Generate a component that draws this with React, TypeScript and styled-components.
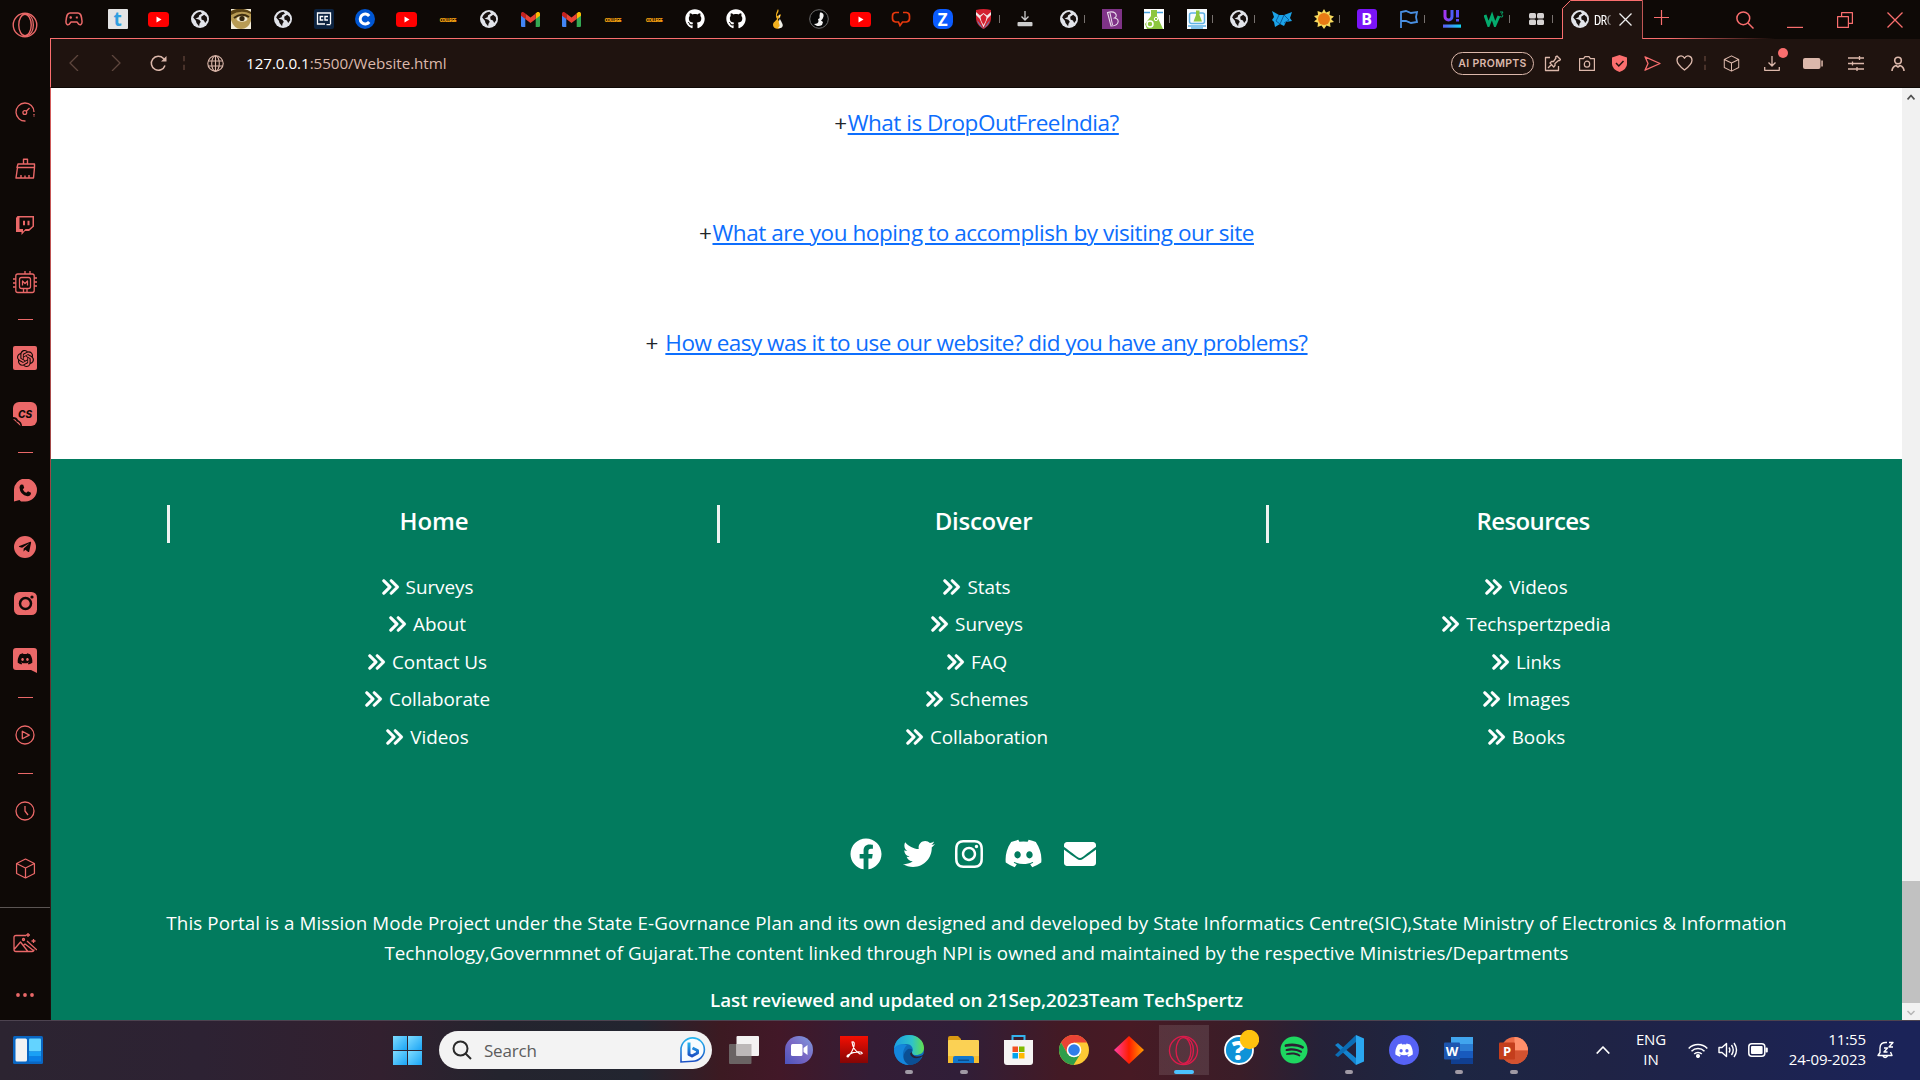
import React from "react";
import styled, { createGlobalStyle } from "styled-components";
import { FaFacebook, FaTwitter, FaInstagram, FaEnvelope, FaGithub, FaSpotify, FaTelegramPlane } from "react-icons/fa";
import { FaDiscord, FaAnglesRight } from "react-icons/fa6";
import { SiOpenai } from "react-icons/si";

const coral = "#fa6e6e";
const rose = "#ea6868";
const sand = "#dcb8ab";
const ui = `"Segoe UI", "Open Sans", "Noto Sans", sans-serif`;

const Global = createGlobalStyle`
  * { box-sizing: border-box; }
  body { margin: 0; background: #0e0906; font-family: ${ui}; overflow: hidden; }
  svg { display: block; flex: none; }
`;

const Desktop = styled.div`
  width: 1920px;
  height: 1080px;
  display: flex;
  flex-direction: column;
  overflow: hidden;
`;
const BrowserWindow = styled.div`
  display: flex;
  height: 1020px;
  background: #0e0906;
`;
const SideBar = styled.nav`
  width: 50px;
  height: 1020px;
  display: flex;
  flex-direction: column;
  color: ${rose};
`;
const SideSlot = styled.div<{ $h?: number; $gap?: number }>`
  height: ${(p) => p.$h ?? 56}px;
  margin-top: ${(p) => p.$gap ?? 0}px;
  display: flex;
  align-items: center;
  justify-content: center;
`;
const Dash = styled.i`
  width: 15px;
  height: 1px;
  background: ${rose};
`;
const SideRule = styled.div`
  height: 1px;
  margin-top: 11px;
  background: #5b5553;
`;
const IconTile = styled.span`
  width: 24px;
  height: 24px;
  border-radius: 2px;
  background: ${rose};
  color: #0e0906;
  display: flex;
  align-items: center;
  justify-content: center;
`;
const CsTile = styled(IconTile)`
  border-radius: 6px;
  position: relative;
  font: italic 800 10px Inter, sans-serif;
  svg { position: absolute; left: 0; bottom: 0; }
`;
const TelegramDisc = styled(IconTile)`
  width: 22px;
  height: 22px;
  border-radius: 50%;
`;
const Main = styled.div`
  width: 1870px;
  display: flex;
  flex-direction: column;
`;
const TabStrip = styled.div`
  height: 39px;
  display: flex;
  background: linear-gradient(90deg, ${coral} 0 1620px, #0e0906 1725px) bottom / 100% 1px no-repeat #0e0906;
`;
const Tab = styled.div<{ $w: number; $sliver?: boolean }>`
  width: ${(p) => p.$w}px;
  height: 38px;
  display: flex;
  flex: none;
  align-items: center;
  justify-content: center;
  position: relative;
  &::after {
    content: "";
    display: ${(p) => (p.$sliver ? "block" : "none")};
    position: absolute;
    right: 5px;
    top: 15px;
    width: 1px;
    height: 8px;
    background: #77716e;
  }
`;
const WideTabs = styled.div`
  display: flex;
  flex: none;
  margin-left: 2px;
`;
const ActiveTab = styled.div`
  width: 81px;
  height: 39px;
  margin-left: 4px;
  display: flex;
  align-items: center;
  padding: 0 0 1px 9px;
  position: relative;
  flex: none;
  background: #1f130f;
  clip-path: polygon(8px 0, 100% 0, 100% 100%, 0 100%, 0 8px);
`;
const TabOutline = styled.svg`
  position: absolute;
  inset: 0;
`;
const TabTitle = styled.span`
  width: 17px;
  margin: 0 8px 0 5px;
  overflow: hidden;
  white-space: nowrap;
  font: 15px "Open Sans", sans-serif;
  font-stretch: condensed;
  letter-spacing: -0.8px;
  color: #fff;
  mask-image: linear-gradient(90deg, #000 65%, #0004);
`;
const NewTab = styled.div`
  width: 37px;
  display: flex;
  align-items: center;
  justify-content: center;
  padding-bottom: 4px;
  color: ${coral};
`;
const WindowButtons = styled.div`
  margin-left: auto;
  display: flex;
  align-items: center;
  color: ${coral};
`;
const WindowButton = styled.div`
  width: 50px;
  height: 38px;
  display: flex;
  align-items: center;
  justify-content: center;
`;
const AddressBar = styled.div`
  height: 49px;
  display: flex;
  align-items: center;
  background: #1f130f;
  border-left: 1px solid ${coral};
  border-bottom: 1px solid #0e0906;
  color: ${sand};
`;
const ToolCell = styled.div<{ $w: number; $color?: string }>`
  width: ${(p) => p.$w}px;
  height: 48px;
  display: flex;
  flex: none;
  align-items: center;
  justify-content: center;
  position: relative;
  color: ${(p) => p.$color ?? "inherit"};
`;
const Url = styled.div`
  margin-left: 3px;
  font-size: 15.2px;
  letter-spacing: -0.05px;
  b { color: #fff; font-weight: 400; }
`;
const Spacer = styled.div`flex: 1;`;
const PromptPill = styled.div`
  width: 83px;
  height: 23px;
  border: 1.5px solid ${sand};
  border-radius: 12px;
  display: flex;
  align-items: center;
  justify-content: center;
  font: 600 10.5px Inter, sans-serif;
  letter-spacing: 0.35px;
`;
const Separator = styled.i`
  height: 14px;
  border-left: 2px dashed #49322a;
`;
const Badge = styled.i`
  position: absolute;
  right: 3px;
  top: 9px;
  width: 10px;
  height: 10px;
  border-radius: 50%;
  background: ${coral};
`;
const Viewport = styled.div`
  height: 932px;
  display: flex;
`;
const Page = styled.div`
  width: 1852px;
  height: 932px;
  overflow: hidden;
  display: flex;
  flex-direction: column;
  background: #fff;
  border-left: 1px solid;
  border-image: linear-gradient(#d65d5d, #a04848 40%, #1a0c0a) 1;
`;
const FaqList = styled.section`
  height: 371px;
  padding-top: 17px;
  display: flex;
  flex-direction: column;
  align-items: center;
  gap: 74px;
  color: #212529;
`;
const FaqRow = styled.div<{ $ls: number }>`
  height: 36px;
  line-height: 36px;
  font-size: 22.5px;
  white-space: pre;
  letter-spacing: ${(p) => p.$ls}px;
`;
const Plus = styled.span`
  letter-spacing: 0.6px;
`;
const FaqLink = styled.a`
  color: #0d6efd;
  text-decoration: underline;
  text-decoration-thickness: 2px;
  text-underline-offset: 2px;
`;
const Footer = styled.footer`
  height: 561px;
  background: #027b5e;
  color: #fff;
  padding-top: 46px;
  display: flex;
  flex-direction: column;
  align-items: center;
`;
const FooterColumns = styled.div`
  display: grid;
  grid-template-columns: repeat(3, 549.5px);
`;
const FooterColumn = styled.div`
  padding: 0 14px 0 15px;
`;
const ColumnTitle = styled.h4<{ $ls: number }>`
  margin: 0 0 25px;
  height: 38px;
  line-height: 31px;
  padding-left: 10px;
  border-left: 3px solid #eef3f1;
  text-align: center;
  font-size: 24px;
  font-weight: 600;
  letter-spacing: ${(p) => p.$ls}px;
`;
const FooterLink = styled.div`
  height: 37.5px;
  padding-right: 2px;
  display: flex;
  align-items: center;
  justify-content: center;
  gap: 6px;
  font-size: 18.9px;
  letter-spacing: -0.05px;
  svg { stroke: currentColor; stroke-width: 18px; }
`;
const SocialRow = styled.div`
  margin: 82px 7px 0 0;
  height: 32px;
  display: flex;
  gap: 20.5px;
  align-items: center;
`;
const SocialIcon = styled.span<{ $w: number }>`
  width: ${(p) => p.$w}px;
  display: flex;
  justify-content: center;
`;
const Legal = styled.p<{ $ls: number }>`
  margin: 0;
  height: 30px;
  line-height: 30px;
  white-space: nowrap;
  font-size: 18.8px;
  letter-spacing: ${(p) => p.$ls}px;
`;
const LegalBlock = styled.div`
  margin-top: 38px;
  display: flex;
  flex-direction: column;
  align-items: center;
`;
const Reviewed = styled(Legal)`
  margin-top: 17px;
  font-weight: 600;
`;
const ScrollTrack = styled.div`
  width: 18px;
  height: 932px;
  background: #f1f1f1;
  display: flex;
  flex-direction: column;
  align-items: center;
`;
const ScrollThumb = styled.div`
  width: 18px;
  height: 122px;
  margin-top: 774px;
  margin-bottom: 7px;
  background: #c1c1c1;
`;
const Taskbar = styled.div`
  height: 60px;
  border-top: 1px solid #4d4350;
  padding-bottom: 1px;
  display: flex;
  align-items: center;
  color: #fff;
  background: linear-gradient(90deg, #2c2431 0, #2d2233 200px, #32202f 380px, #24242e 500px, #222530 640px, #3c1a22 720px, #421828 780px, #331d36 870px, #301e38 960px, #431a25 1060px, #471a24 1130px, #3a1d28 1240px, #252138 1320px, #1d2642 1440px, #1f2345 1600px, #1b2358 1900px);
`;
const WidgetButton = styled.div`
  width: 55px;
  display: flex;
  justify-content: center;
`;
const StartButton = styled.div`
  margin-left: 338px;
  width: 29px;
  height: 29px;
  display: grid;
  grid-template-columns: 1fr 1fr;
  gap: 1px;
  i { background: linear-gradient(135deg, #7fdcff, #1aa4f5); }
`;
const SearchBox = styled.div`
  margin-left: 17px;
  width: 273px;
  height: 38px;
  border-radius: 19px;
  background: #f3f3f3;
  display: flex;
  align-items: center;
  padding: 0 6px 0 13px;
  color: #5c5c5c;
  font-size: 17px;
  span { margin-left: 12px; flex: 1; letter-spacing: -0.2px; }
`;
const AppRow = styled.div`
  margin-left: 4px;
  display: flex;
`;
const AppButton = styled.div<{ $state?: "open" | "active" }>`
  width: 55px;
  height: 58px;
  display: flex;
  align-items: center;
  justify-content: center;
  position: relative;
  background: ${(p) => (p.$state === "active" ? "linear-gradient(#ffffff1c,#ffffff1c) 3px center / 50px 50px no-repeat" : "none")};
  &::after {
    content: "";
    display: ${(p) => (p.$state ? "block" : "none")};
    position: absolute;
    bottom: 5px;
    width: ${(p) => (p.$state === "active" ? 20 : 8)}px;
    height: 4px;
    border-radius: 2px;
    background: ${(p) => (p.$state === "active" ? "#4cc2ff" : "#a09aa5")};
  }
`;
const Tray = styled.div`
  margin-left: auto;
  width: 333px;
  display: flex;
  align-items: center;
`;
const TrayCell = styled.div<{ $w: number }>`
  width: ${(p) => p.$w}px;
  display: flex;
  justify-content: center;
`;
const TrayText = styled.div<{ $w: number; $right?: boolean }>`
  width: ${(p) => p.$w}px;
  padding-bottom: 2px;
  text-align: ${(p) => (p.$right ? "right" : "center")};
  font-size: 15px;
  line-height: 20px;
  letter-spacing: -0.1px;
  white-space: nowrap;
`;
const LetterTile = styled.span<{ $bg: string; $fg: string; $r: number; $fs: number }>`
  width: 20px;
  height: 20px;
  border-radius: ${(p) => p.$r}px;
  background: ${(p) => p.$bg};
  color: ${(p) => p.$fg};
  display: flex;
  align-items: center;
  justify-content: center;
  font-weight: 700;
  font-size: ${(p) => p.$fs}px;
  line-height: 1;
`;
const CollegeMark = styled.span`
  padding-top: 2px;
  color: #f0a010;
  font: 800 5px/8px "Open Sans", sans-serif;
  letter-spacing: -0.85px;
`;

type SvgProps = { w: number; h?: number; box?: string; sw?: number; children: React.ReactNode };
const Line = ({ w, h = w, box = "0 0 24 24", sw = 1.5, children }: SvgProps) => (
  <svg width={w} height={h} viewBox={box} fill="none" stroke="currentColor" strokeWidth={sw} strokeLinejoin="round">
    {children}
  </svg>
);
const Solid = ({ w, h = w, box = "0 0 24 24", children }: SvgProps) => (
  <svg width={w} height={h} viewBox={box} fill="currentColor">{children}</svg>
);

const Opera = ({ size, color, sw = 1.6 }: { size: number; color: string; sw?: number }) => (
  <svg width={size} height={size} viewBox="0 0 30 30" fill="none" stroke={color} strokeWidth={sw}>
    <circle cx="15" cy="15" r="13.6" />
    <ellipse cx="15" cy="15" rx="7.2" ry="12.4" />
    <path d="M16 2.5c6 .5 8.600 6.500 8.600 12.500S22 27 16 27.500" />
  </svg>
);
const Globe = ({ size = 18 }: { size?: number }) => (
  <svg width={size} height={size} viewBox="0 0 18 18">
    <circle cx="9" cy="9" r="9" fill="#e2e4ea" />
    <path d="M2.200 7.500C3.500 4.500 6 2 9.500 1.800l1.500 1.700-2.800 1.700-.6 2L4.500 8.600l3.800 1.200 1.500 1.900-1.300 2-.4 2.500-2.600-3.200-.6-2.300z" fill="#17110f" />
    <path d="M10.200 6.800l3-2 2.600 2.200.4 3.200-2 2.800-1.300-2.500-2.400-1z" fill="#17110f" />
  </svg>
);
const YouTube = () => (
  <svg width="21" height="15" viewBox="0 0 21 15"><rect width="21" height="15" rx="3.500" fill="#f00" /><path d="M8.500 4.500v6l5-3z" fill="#fff" /></svg>
);
const Gmail = () => (
  <svg width="19" height="15" viewBox="0 0 19 15">
    <path d="M0 2v11.500A1.300 1.300 0 0 0 1.300 15H4.300V6z" fill="#4285f4" />
    <path d="M19 2v11.500a1.300 1.300 0 0 1-1.300 1.500H14.700V6z" fill="#34a853" />
    <path d="M14.700 1.500V7L19 3.800V2c0-2-2-2.500-3.300-1.500z" fill="#fbbc04" />
    <path d="M4.300 7V1.500l5.200 4 5.200-4V7l-5.200 4z" fill="#ea4335" />
    <path d="M0 2v1.800L4.300 7V1.500L3.300.700C2-.5 0 0 0 2z" fill="#c5221f" />
  </svg>
);
const College = () => <CollegeMark>COLLEGE</CollegeMark>;
const Cube = ({ size }: { size: number }) => (
  <Line w={size} box="0 0 20 20" sw={1.2}><path d="M10 1l8.500 4.200v9.600L10 19l-8.500-4.200V5.200zM1.500 5.200L10 9.500l8.500-4.300M10 9.500V19" /></Line>
);

const favicons: { icon: React.ReactNode; sliver?: boolean }[] = [
  { icon: <LetterTile $bg="#e4e4e4" $fg="#2f9fe0" $r={1} $fs={19}>t</LetterTile> },
  { icon: <YouTube /> },
  { icon: <Globe /> },
  { icon: (
    <svg width="20" height="20" viewBox="0 0 20 20"><rect width="20" height="20" fill="#f3ecd8" /><path d="M0 2Q10-3 20 3v9q-3 8-10 8T0 11z" fill="#b89b54" /><path d="M0 2Q10-3 20 3v2Q10 0 0 6z" fill="#5b4315" /><path d="M3 9Q10 3 18 8" stroke="#3c2c10" strokeWidth="2" fill="none" /><ellipse cx="11" cy="10" rx="5.500" ry="2.800" fill="#efe6cc" /><circle cx="11" cy="9.500" r="2.600" fill="#33260f" /></svg>
  ) },
  { icon: <Globe /> },
  { icon: (
    <svg width="20" height="20" viewBox="0 0 20 20"><rect width="20" height="20" rx="2" fill="#0c2340" /><path d="M11 15H3.500V4h13v11M12.500 15.700h4" stroke="#fff" strokeWidth="1.300" fill="none" /><path d="M9.300 7.500H6.300v3.500h3M14 7.500h-3v3.500h3" stroke="#fff" strokeWidth="1.400" fill="none" /></svg>
  ) },
  { icon: (
    <svg width="20" height="20" viewBox="0 0 20 20"><circle cx="10" cy="10" r="10" fill="#0056d2" /><path d="M14.200 7A5 5 0 1 0 14.200 13" stroke="#fff" strokeWidth="3" fill="none" /></svg>
  ) },
  { icon: <YouTube /> },
  { icon: <College /> },
  { icon: <Globe /> },
  { icon: <Gmail /> },
  { icon: <Gmail /> },
  { icon: <College /> },
  { icon: <College /> },
  { icon: <FaGithub size={20} color="#fff" /> },
  { icon: <FaGithub size={20} color="#fff" /> },
  { icon: (
    <svg width="12" height="20" viewBox="0 0 12 20"><path d="M6 0c2 3-2 5-1 7 3-1 4-2 4-2 0 3-3 4-3 6 2 2 5 4 3 7-2 3-8 2-8-2 0-3 3-4 4-6-2-3-1-6 1-10z" fill="#f2b01e" /><path d="M7 5c3 4-1 6 0 9s1 3-1 5c4 1 6-2 4-5-1-3-3-4-3-9z" fill="#efeee6" /></svg>
  ) },
  { icon: (
    <svg width="20" height="20" viewBox="0 0 20 20"><circle cx="10" cy="10" r="9.300" fill="#050505" stroke="#6e6e6e" /><path d="M11 3.500c3 0 4 2 3.500 4L13.500 10l-1.500 1.500 2 1.500-1 3c-3 2-6 1-8-1 3 0 4.500-1 4.500-3l-.5-2c1.500 0 2-1 1.500-3z" fill="#f3f3f3" /></svg>
  ) },
  { icon: <YouTube /> },
  { icon: (
    <svg width="20" height="16" viewBox="0 0 20 16" fill="none" stroke="#e8380d" strokeWidth="1.700"><path d="M8 1.500H4.500a3.500 3.500 0 0 0-3 3.500v2.500a3.500 3.500 0 0 0 3 3.500H7.500l1.500 3.500 2.500-3.500h4a3.500 3.500 0 0 0 3-3.500V5a3.500 3.500 0 0 0-3-3.500H12" /></svg>
  ) },
  { icon: <LetterTile $bg="#0b5cff" $fg="#fff" $r={7} $fs={17}>Z</LetterTile> },
  { icon: (
    <svg width="17" height="20" viewBox="0 0 17 20"><path d="M1 1q7.500-2 15 0v8c0 6-4 9-7.500 11C5 18 1 15 1 9z" fill="#d3202f" /><path d="M2 11l6.500 9L15 11c-1 4-4 7-6.500 9C6 18 3 15 2 11z" fill="#3aa0e0" /><path d="M1 3l4 3.500L8.500 4 12 6.500 16 3v3l-3.500 3.500-4 9-4-9L1 6z" fill="#f3e9ea" /><path d="M5.500 8l3-3 3 3-.8 4-2.200 4-2.200-4z" fill="#d3202f" /></svg>
  ), sliver: true },
  { icon: (
    <svg width="16" height="16" viewBox="0 0 16 16"><path d="M8 0v9M4.500 5.500L8 9l3.500-3.500" stroke="#ccc" strokeWidth="1.300" fill="none" /><rect x="0.500" y="11" width="15" height="4.200" rx="1" fill="#ccc" /></svg>
  ) },
];
const wideFavicons: { icon: React.ReactNode; sliver?: boolean }[] = [
  { icon: <Globe />, sliver: true },
  { icon: (
    <svg width="20" height="20" viewBox="0 0 20 20"><rect width="20" height="20" fill="#7f3387" /><path d="M5.500 3.500q5-1.500 7.500.5c2 2 1.500 4-.5 5 3.500.5 4.500 3 3 5.500-1.500 2-4 2.500-6.500 2.500zM8 4l2.500 12" stroke="#eadcec" strokeWidth="1.100" fill="none" /></svg>
  ) },
  { icon: (
    <svg width="20" height="20" viewBox="0 0 20 20"><rect width="20" height="20" fill="#fff" /><path d="M0 3.500h6M13 3.500h6" stroke="#4aa3df" strokeWidth="1.500" /><path d="M7 1h6v6l6 13H3l-2-5 6-8z" fill="#8dc63f" /><circle cx="6" cy="15" r="3" fill="none" stroke="#fff" strokeWidth="1.500" /><circle cx="12" cy="10" r="1.700" fill="none" stroke="#fff" /></svg>
  ), sliver: true },
  { icon: (
    <svg width="20" height="20" viewBox="0 0 20 20"><rect width="20" height="20" fill="#f7fbff" /><rect x="2.500" y="4" width="15" height="10.500" rx="2" fill="none" stroke="#5fb2e6" strokeWidth="1.500" /><path d="M9 1.500h3.500V6l2.500 6.500H6.500L9 6z" fill="#8dc63f" /><path d="M1 17h18M4 19h12" stroke="#5fb2e6" strokeWidth="1.300" /></svg>
  ), sliver: true },
  { icon: <Globe />, sliver: true },
  { icon: (
    <svg width="20" height="16" viewBox="0 0 20 16"><path d="M0 0l7 4h5l8-3-2 6 2 3-6 1-2 4-4-2-5 3-1-5-2-2 2-3z" fill="#1ba3e8" /><path d="M7 4l-3 6 4 3 4-9 5 5-5 3" stroke="#0c5c9c" strokeWidth="1" fill="none" /></svg>
  ) },
  { icon: (
    <svg width="20" height="20" viewBox="0 0 20 20"><path d="M10 0l2 3.500L16 2l-.5 4L20 7.500 17 10l3 3-4 .8.500 4.200-4-1.500L10 20l-2.500-3.500L3.500 18l.5-4.200L0 12.500 3 10 0 7l4-1-.5-4L8 3.500z" fill="#f7d95c" /><circle cx="10" cy="10" r="6" fill="#ea7a14" /></svg>
  ), sliver: true },
  { icon: <LetterTile $bg="#7a14f8" $fg="#fff" $r={3} $fs={16}>B</LetterTile> },
  { icon: (
    <svg width="20" height="20" viewBox="0 0 20 20" fill="none" stroke="#4a90e2" strokeWidth="1.800"><path d="M2 19V3l5-1 5 2 6-1-1 5 1 5-6 1-5-2H2" /></svg>
  ), sliver: true },
  { icon: (
    <svg width="18" height="18" viewBox="0 0 18 18"><defs><linearGradient id="uig"><stop stopColor="#a435f0" /><stop offset="1" stopColor="#4a5ff6" /></linearGradient><linearGradient id="uib"><stop stopColor="#5b5cf6" /><stop offset="1" stopColor="#12d8f6" /></linearGradient></defs><path d="M2 0v6.500a3.500 3.500 0 0 0 7 0V0" stroke="url(#uig)" strokeWidth="3" fill="none" /><rect x="13" y="0" width="3" height="7.500" fill="#5a4cf7" /><rect x="13" y="9" width="3" height="2.500" fill="#5a4cf7" /><rect y="14.500" width="18" height="3.200" fill="url(#uib)" /></svg>
  ) },
  { icon: (
    <svg width="20" height="16" viewBox="0 0 20 16"><path d="M1 4l3.500 10L8 5l3 9 4-9" stroke="#04aa6d" strokeWidth="3" fill="none" /><path d="M16 1h3l-1.500 2.200Q19.500 4 18.500 5.800 17 6.500 16 5.500" stroke="#04aa6d" strokeWidth="1" fill="none" /></svg>
  ), sliver: true },
  { icon: (
    <svg width="15" height="12" viewBox="0 0 15 12" fill="#d5d2d1"><rect width="7" height="5.500" rx="1.500" /><rect x="8" width="7" height="5.500" rx="1.500" /><rect y="6.500" width="7" height="5.500" rx="1.500" /><rect x="8" y="6.500" width="7" height="5.500" rx="1.500" /></svg>
  ), sliver: true },
];

const Side = () => (
  <SideBar>
    <SideSlot $h={50}><Opera size={26} color={rose} /></SideSlot>
    <SideSlot $gap={34}><Line w={20} box="0 0 20 20" sw={1.300}><path d="M10.500 19A9 9 0 1 1 19 10M19 12v1.500M19 14.500v.5" /><circle cx="9.800" cy="10.500" r="1.900" /><path d="M11.200 9.200L14.500 6" /></Line></SideSlot>
    <SideSlot><Line w={21} box="0 0 21 21" sw={1.400}><path d="M8.500 6V1.200h4V6M3 6h16.500v3.500H2zM2.500 9.500L1 20h17.500l1-10.500M6 20v-3M10 20v-2.500M14 20v-3" /></Line></SideSlot>
    <SideSlot $gap={1}><Solid w={18} h={19} box="0 0 18 19"><path fillRule="evenodd" d="M0 2l1.500-2H18v10.500L13 15H9l-3.500 4v-3H0zM3.500 1.500V13H7v2.500L9.500 13H13l3.500-3V1.500zM7 4.800h2v4.500H7zm4.500 0h2v4.500h-2z" /></Solid></SideSlot>
    <SideSlot $gap={2}><Line w={24} box="0 0 24 24" sw={1.300}><rect x="2.800" y="3" width="18.400" height="18.500" rx="2" /><rect x="6.500" y="6.500" width="11" height="11" rx="2" /><path d="M9.500 14.500V10l2.500 2.500L14.500 10v4.500M0 8h3M0 12h3M0 16h3M21 7h3M21 11h3M21 15h3M12 3V0M17 3V0M10.500 21v-3M14 21v-3" /></Line></SideSlot>
    <SideSlot $h={16}><Dash /></SideSlot>
    <SideSlot $gap={3}><IconTile><SiOpenai size={17} /></IconTile></SideSlot>
    <SideSlot><CsTile>CS<svg width="9" height="9" viewBox="0 0 9 9"><path d="M0 0Q4 0 5 3Q9 5 9 9H0z" fill="#0e0906" /><path d="M0 2q3 0 3.500 2.500Q7 5 7.500 9z" fill={rose} /></svg></CsTile></SideSlot>
    <SideSlot $h={16} $gap={2}><Dash /></SideSlot>
    <SideSlot $gap={2}><svg width="23" height="23" viewBox="0 0 23 23"><path d="M0 22.500V11.500A11.500 11.500 0 1 1 11.500 22.500H7L5.500 21z" fill={rose} /><path d="M7 5.500l2.200.3 1 3-1.400 1.600q1.200 2.400 3.600 3.400l1.600-1.500 3 1.500q0 3.400-3.500 3.400Q6 16 5.500 8.500 5.600 6.400 7 5.500z" fill="#0e0906" /></svg></SideSlot>
    <SideSlot $gap={1}><TelegramDisc><FaTelegramPlane size={14} /></TelegramDisc></SideSlot>
    <SideSlot><svg width="23" height="23" viewBox="0 0 23 23"><rect width="23" height="23" rx="5.500" fill={rose} /><circle cx="11.500" cy="11.500" r="5.500" fill="none" stroke="#0e0906" strokeWidth="2.500" /><circle cx="18" cy="5" r="1.600" fill="#0e0906" /></svg></SideSlot>
    <SideSlot $gap={1}><svg width="24" height="25" viewBox="0 0 24 25"><path d="M3 0h18q3 0 3 3v22l-6-3H3q-3 0-3-3V3q0-3 3-3z" fill={rose} /><g transform="translate(4 4.500) scale(.025)"><path fill="#0e0906" d="M525 70A485 485 0 0 0 404 32l-15 31a451 451 0 0 0-135 0L238 32A484 484 0 0 0 117 70C40 184 19 296 30 406a488 488 0 0 0 148 75l32-52-50-24 12-10a348 348 0 0 0 298 0l12 10-50 24 32 52a486 486 0 0 0 148-75c12-127-20-237-87-336zM222 338c-29 0-53-26-53-59s23-60 53-60 53 27 53 60-23 59-53 59zm196 0c-29 0-53-26-53-59s23-60 53-60 53 27 53 60-23 59-53 59z" /></g></svg></SideSlot>
    <SideSlot $h={16} $gap={1}><Dash /></SideSlot>
    <SideSlot $gap={2}><Line w={20} box="0 0 20 20" sw={1.300}><circle cx="10" cy="10" r="9" /><path d="M7.300 6.300v7.500l7-3.700z" /></Line></SideSlot>
    <SideSlot $h={16} $gap={2}><Dash /></SideSlot>
    <SideSlot $gap={2}><Line w={20} box="0 0 20 20" sw={1.300}><circle cx="10" cy="10" r="9" /><path d="M10 5v5l3 4" /></Line></SideSlot>
    <SideSlot $gap={1}><Cube size={21} /></SideSlot>
    <SideRule />
    <SideSlot $gap={7}><Line w={24} h={20} box="0 0 24 20" sw={1.300}><path d="M13 2.500H3q-2 0-2 2v12q0 2 2 2h16q2 0 2-2M1.500 16l6-7 7 9M10 13l2-2 4 3 5 4M14 8l10 9M15 0v4M13 2h4M20.500 6v4M18.500 8h4" /><circle cx="10.500" cy="6.500" r="1" /></Line></SideSlot>
    <SideSlot $h={16} $gap={16}><Solid w={18} h={4} box="0 0 18 4"><circle cx="2" cy="2" r="1.900" /><circle cx="9" cy="2" r="1.900" /><circle cx="16" cy="2" r="1.900" /></Solid></SideSlot>
  </SideBar>
);

const Chrome = () => (
  <>
    <TabStrip>
      <Tab $w={47}>
        <Line w={18} h={14} box="0 0 18 14" sw={1.500}><path d="M5 1h8c3 0 3.500 3 4 8 .300 3-1.500 4.500-3 3.500L12 10H6l-2 2.500C2.500 13.500.7 12 1 9c.5-5 1-8 4-8z" stroke={rose} /><path d="M4.500 5.500h2.400M5.700 4.300v2.400M12 4.500v2M12.800 5.500h-2" stroke={rose} /></Line>
      </Tab>
      {favicons.map((f, i) => <Tab key={i} $w={41.25} $sliver={f.sliver}>{f.icon}</Tab>)}
      <WideTabs>
        {wideFavicons.map((f, i) => <Tab key={i} $w={42.5} $sliver={f.sliver}>{f.icon}</Tab>)}
      </WideTabs>
      <ActiveTab>
        <TabOutline width="81" height="39"><path d="M.5 39V8.500L8.500.500H80.500V39" fill="none" stroke={coral} /></TabOutline>
        <Globe size={18} />
        <TabTitle>DROPOUTFREEINDIA</TabTitle>
        <Line w={13} box="0 0 13 13" sw={1.300}><path d="M.5.500l12 12M12.500.500l-12 12" stroke="#eee" /></Line>
      </ActiveTab>
      <NewTab><Line w={15} box="0 0 15 15" sw={1.200}><path d="M7.500 0v15M0 7.500h15" /></Line></NewTab>
      <WindowButtons>
        <WindowButton><Line w={18} box="0 0 18 18" sw={1.500}><circle cx="7.300" cy="7.300" r="6.400" /><path d="M12 12l5.500 5.500" /></Line></WindowButton>
        <WindowButton><Line w={16} h={16} box="0 0 16 16" sw={1.200}><path d="M0 15.400h16" /></Line></WindowButton>
        <WindowButton><Line w={16} box="0 0 16 16" sw={1.200}><path d="M.600 4.600h10.800v10.800H.600zM4.600 4.600V.600h10.800v10.800h-4" /></Line></WindowButton>
        <WindowButton><Line w={16} box="0 0 16 16" sw={1.300}><path d="M.5.500l15 15M15.500.500l-15 15" /></Line></WindowButton>
      </WindowButtons>
    </TabStrip>
    <AddressBar>
      <ToolCell $w={46} $color="#5d463d"><Line w={10} h={16} box="0 0 10 16" sw={1.300}><path d="M9 0L1 8l8 8" /></Line></ToolCell>
      <ToolCell $w={38} $color="#5d463d"><Line w={10} h={16} box="0 0 10 16" sw={1.300}><path d="M1 0l8 8-8 8" /></Line></ToolCell>
      <ToolCell $w={46}><Line w={17} box="0 0 17 17" sw={1.500}><path d="M15 10.500A7 7 0 1 1 13.500 3.500L15.500 5.500" /><path d="M16.500 1v5.500H11z" fill="currentColor" stroke="none" /></Line></ToolCell>
      <ToolCell $w={6}><Separator /></ToolCell>
      <ToolCell $w={56}><Line w={17} box="0 0 17 17" sw={1.100}><circle cx="8.500" cy="8.500" r="7.700" /><ellipse cx="8.500" cy="8.500" rx="3.800" ry="7.700" /><path d="M8.500.800v15.400M1 6h15M1 11h15" /></Line></ToolCell>
      <Url><b>127.0.0.1</b>:5500/Website.html</Url>
      <Spacer />
      <PromptPill>AI PROMPTS</PromptPill>
      <ToolCell $w={37}><Line w={17} box="0 0 17 17" sw={1.300}><path d="M6 2.500H1.500v13h13V11M4 13l3.500-3.500M6 8l1.500-1.500h2L12 3l-.5-1L13 1l3.500 3.500-1 1.200-1-.3L11 8.500v2L9.700 12z" /></Line></ToolCell>
      <ToolCell $w={32}><Line w={16} h={15} box="0 0 16 15" sw={1.200}><path d="M.600 2.600h4L6 .600h4l1.400 2h4v11.800H.600z" /><ellipse cx="8" cy="8.200" rx="2.700" ry="3" /></Line></ToolCell>
      <ToolCell $w={33}><svg width="15" height="17" viewBox="0 0 15 17"><path d="M7.500 0L15 2.500V9q0 5-7.500 8Q0 14 0 9V2.500z" fill={coral} /><path d="M4 8l2.800 3L11.500 6" fill="none" stroke="#1f130f" strokeWidth="1.500" /></svg></ToolCell>
      <ToolCell $w={32} $color={coral}><Line w={17} h={15} box="0 0 17 15" sw={1.300}><path d="M1 .800L16 7.500 1 14.200 4 7.500z" /></Line></ToolCell>
      <ToolCell $w={32}><Line w={17} h={16} box="0 0 17 16" sw={1.300}><path d="M8.500 15C4 11.500 1 8.500 1 5.200 1 .5 6.500-.5 8.500 3.200 10.500-.5 16 .5 16 5.200 16 8.500 13 11.500 8.500 15z" /></Line></ToolCell>
      <ToolCell $w={10}><Separator /></ToolCell>
      <ToolCell $w={42}><Cube size={17} /></ToolCell>
      <ToolCell $w={39}><Line w={16} h={15} box="0 0 16 15" sw={1.300}><path d="M8 0v10M4.500 6.500L8 10l3.500-3.500M.7 11v3.300h14.600V11" /></Line><Badge /></ToolCell>
      <ToolCell $w={43}><Solid w={20} h={11} box="0 0 20 11"><rect width="17.500" height="11" rx="2" /><rect x="18.300" y="2.500" width="1.500" height="6" /></Solid></ToolCell>
      <ToolCell $w={44}><Line w={16} h={15} box="0 0 16 15" sw={1.300}><path d="M0 2h16M0 7.500h16M0 13h16M11.500 0v4M4.500 5.500v4M9 11v4" /></Line></ToolCell>
      <ToolCell $w={39}><Line w={14} h={15} box="0 0 14 15" sw={1.600}><circle cx="7" cy="4.500" r="3.300" /><path d="M1 15c0-3 1.500-4.500 4-5.500L7 11l2-1.500c2.500 1 4 2.500 4 5.500" /></Line></ToolCell>
      <ToolCell $w={3}>{null}</ToolCell>
    </AddressBar>
  </>
);

const columns = [
  { title: "Home", ls: -0.15, links: ["Surveys", "About", "Contact Us", "Collaborate", "Videos"] },
  { title: "Discover", ls: -0.25, links: ["Stats", "Surveys", "FAQ", "Schemes", "Collaboration"] },
  { title: "Resources", ls: -0.6, links: ["Videos", "Techspertzpedia", "Links", "Images", "Books"] },
];

const Site = () => (
  <Page>
    <FaqList>
      <FaqRow $ls={-0.48}><Plus>+</Plus><FaqLink>What is DropOutFreeIndia?</FaqLink></FaqRow>
      <FaqRow $ls={-0.43}><Plus>+</Plus><FaqLink>What are you hoping to accomplish by visiting our site</FaqLink></FaqRow>
      <FaqRow $ls={-0.52}><Plus>+ </Plus><FaqLink>How easy was it to use our website? did you have any problems?</FaqLink></FaqRow>
    </FaqList>
    <Footer>
      <FooterColumns>
        {columns.map((c) => (
          <FooterColumn key={c.title}>
            <ColumnTitle $ls={c.ls}>{c.title}</ColumnTitle>
            {c.links.map((l) => <FooterLink key={l}><FaAnglesRight size={20} />{l}</FooterLink>)}
          </FooterColumn>
        ))}
      </FooterColumns>
      <SocialRow>
        <SocialIcon $w={32}><FaFacebook size={32} /></SocialIcon>
        <SocialIcon $w={32}><FaTwitter size={32} /></SocialIcon>
        <SocialIcon $w={28}><FaInstagram size={32} /></SocialIcon>
        <SocialIcon $w={40}><FaDiscord size={39} /></SocialIcon>
        <SocialIcon $w={32}><FaEnvelope size={32} /></SocialIcon>
      </SocialRow>
      <LegalBlock>
        <Legal $ls={0.107}>This Portal is a Mission Mode Project under the State E-Govrnance Plan and its own designed and developed by State Informatics Centre(SIC),State Ministry of Electronics &amp; Information</Legal>
        <Legal $ls={0.05}>Technology,Governmnet of Gujarat.The content linked through NPI is owned and maintained by the respective Ministries/Departments</Legal>
        <Reviewed $ls={-0.07}>Last reviewed and updated on 21Sep,2023Team TechSpertz</Reviewed>
      </LegalBlock>
    </Footer>
  </Page>
);

const OfficeTile = ({ letter, round, c }: { letter: string; round?: boolean; c: string[] }) => (
  <svg width="29" height="29" viewBox="0 0 29 29">
    {round ? (
      <><circle cx="15.500" cy="14.500" r="13.500" fill={c[0]} /><path d="M15.500 1A13.500 13.500 0 0 1 29 14.500H15.500z" fill={c[1]} /><path d="M2 14.500H29a13.500 13.500 0 0 1-27 0z" fill={c[2]} /></>
    ) : (
      <><rect x="7" y="1" width="22" height="7" fill={c[0]} /><rect x="7" y="8" width="22" height="7" fill={c[1]} /><rect x="7" y="15" width="22" height="7" fill={c[2]} /><rect x="7" y="22" width="22" height="6" fill={c[3]} /></>
    )}
    <rect x="0" y="6.500" width="16" height="17" rx="1" fill={c[4]} />
    <text x="8" y="20" textAnchor="middle" fontFamily="Open Sans" fontWeight="700" fontSize="13" fill="#fff">{letter}</text>
  </svg>
);

const apps: { icon: React.ReactNode; state?: "open" | "active" }[] = [
  { icon: <svg width="30" height="28" viewBox="0 0 30 28"><rect y="8" width="22.500" height="20" rx="1" fill="#6a6363" /><rect x="7.500" width="22.500" height="20" rx="1" fill="#f4f2f2" /><rect x="7.500" y="8" width="15" height="12" fill="#bdb8b8" /></svg> },
  { icon: <svg width="29" height="28" viewBox="0 0 29 28"><defs><linearGradient id="tm" x1="1" y1="0" x2="0" y2="1"><stop stopColor="#7d9de0" /><stop offset=".5" stopColor="#7a68c4" /><stop offset="1" stopColor="#4b53bc" /></linearGradient></defs><path d="M1 28V14A14 14 0 1 1 15 28z" fill="url(#tm)" /><rect x="7" y="8" width="11.500" height="12" rx="1.500" fill="#fff" /><path d="M19.500 12l4-3v10l-4-3z" fill="#fff" /></svg> },
  { icon: <svg width="28" height="28" viewBox="0 0 28 28"><defs><linearGradient id="ac" x1="0" y1="0" x2="0" y2="1"><stop stopColor="#f40f02" /><stop offset="1" stopColor="#850505" /></linearGradient></defs><rect width="28" height="27" fill="url(#ac)" /><path d="M12 6q3-1 2 4-1 5-6 11-2 0 0-2 6-4 13-3 3 2-1 2Q13 14 12 6z" fill="none" stroke="#fff" strokeWidth="1.200" /></svg> },
  { icon: <svg width="30" height="30" viewBox="0 0 30 30"><defs><linearGradient id="eg"><stop stopColor="#1b9de2" /><stop offset=".6" stopColor="#2fc3c9" /><stop offset="1" stopColor="#63e04c" /></linearGradient></defs><circle cx="15" cy="15" r="15" fill="#0f6cbd" /><path d="M0 14C1 5 7 0 15 0c9 0 15 6 15 13 0 5-4 7-8 7-3 0-5-1-4-3 2-3 0-8-6-8C6 9 1 12 0 14z" fill="url(#eg)" /><path d="M0 14c0 9 6 16 15 16-6-3-9-13-2-20C7 8 2 10 0 14z" fill="#1486dc" /><path d="M18 17c-1 5 5 7 10 4l-2 4q-4 5-11 5c-7-4-7-12-1-16 4-1 5 1 4 3z" fill="#0b4f94" /><path d="M18 17c0 4 5 6 10 3.500L30 19v3l-2-.5c-5 3-11 2-12-3z" fill="#2b2035" /></svg>, state: "open" },
  { icon: <svg width="31" height="28" viewBox="0 0 31 28"><path d="M0 2q0-2 2-2h8l3 3v7H0z" fill="#d99a13" /><rect y="4" width="31" height="23" rx="1" fill="#fbd154" /><rect y="20" width="31" height="7" fill="#f5bd2e" /><path d="M5 27v-5q0-2 2-2h17q2 0 2 2v5z" fill="#1177cc" /><rect x="10" y="23.500" width="11" height="1.500" fill="#0a4d8c" /></svg>, state: "open" },
  { icon: <svg width="29" height="30" viewBox="0 0 29 30"><path d="M8.500 6V1h12v5" fill="none" stroke="#34b3ee" strokeWidth="2" /><path d="M0 5h29v22q0 3-3 3H3q-3 0-3-3z" fill="#f5f4f3" /><rect x="8.500" y="11.500" width="5.500" height="5.500" fill="#f25022" /><rect x="15" y="11.500" width="5.500" height="5.500" fill="#7fba00" /><rect x="8.500" y="18" width="5.500" height="5.500" fill="#00a4ef" /><rect x="15" y="18" width="5.500" height="5.500" fill="#ffb900" /></svg> },
  { icon: <svg width="30" height="30" viewBox="0 0 30 30"><circle cx="15" cy="15" r="15" fill="#fcc934" /><path d="M2 7.500A15 15 0 0 1 28 7.500H15L8.500 18.700z" fill="#ea4335" /><path d="M2 7.500A15 15 0 0 0 14.500 30L21.500 18.700H8.500z" fill="#2e9e4b" /><circle cx="15" cy="15" r="7.300" fill="#fff" /><circle cx="15" cy="15" r="5.800" fill="#2f7de9" /></svg> },
  { icon: <svg width="30" height="28" viewBox="0 0 30 28"><defs><linearGradient id="dm"><stop stopColor="#ff3ea5" /><stop offset=".5" stopColor="#ff1e00" /><stop offset="1" stopColor="#ff9d00" /></linearGradient></defs><path d="M15 0l15 14-15 14L0 14z" fill="url(#dm)" /></svg> },
  { icon: <Opera size={31} color="#dc1b4b" sw={1.300} />, state: "active" },
  { icon: <svg width="40" height="40" viewBox="0 0 40 40"><circle cx="20" cy="20" r="14" fill="#0e93d8" stroke="#fff" strokeWidth="1.800" /><text x="19.500" y="30" textAnchor="middle" fontFamily="Open Sans" fontWeight="800" fontSize="27" fill="#fff">?</text><circle cx="30.500" cy="9.500" r="9.700" fill="#ffc20e" /></svg> },
  { icon: <FaSpotify size={28} color="#1ed760" /> },
  { icon: <svg width="30" height="30" viewBox="0 0 30 30"><path d="M1 10l3-2 18 15v7z" fill="#1484cf" /><path d="M1 20l3 2L22 7V0z" fill="#0b6db5" /><path d="M22 0l8 3.500v23L22 30z" fill="#2aa7f0" /></svg>, state: "open" },
  { icon: <svg width="30" height="30" viewBox="0 0 30 30"><circle cx="15" cy="15" r="15" fill="#5662f5" /><g transform="translate(5.500 7.500) scale(.0298)"><path fill="#fff" d="M525 70A485 485 0 0 0 404 32l-15 31a451 451 0 0 0-135 0L238 32A484 484 0 0 0 117 70C40 184 19 296 30 406a488 488 0 0 0 148 75l32-52-50-24 12-10a348 348 0 0 0 298 0l12 10-50 24 32 52a486 486 0 0 0 148-75c12-127-20-237-87-336zM222 338c-29 0-53-26-53-59s23-60 53-60 53 27 53 60-23 59-53 59zm196 0c-29 0-53-26-53-59s23-60 53-60 53 27 53 60-23 59-53 59z" /></g></svg> },
  { icon: <OfficeTile letter="W" c={["#41a5ee", "#2b7cd3", "#185abd", "#103f91", "#1d56b0"]} />, state: "open" },
  { icon: <OfficeTile letter="P" round c={["#ed6c47", "#ff8f6b", "#d35230", "", "#c43e1c"]} />, state: "open" },
];

export default function App() {
  return (
    <Desktop>
      <Global />
      <BrowserWindow>
        <Side />
        <Main>
          <Chrome />
          <Viewport>
            <Site />
            <ScrollTrack>
              <Line w={8} h={19} box="0 0 8 19" sw={1.800}><path d="M.5 11.500L4 7.500l3.500 4" stroke="#505050" /></Line>
              <ScrollThumb />
              <Line w={8} h={6} box="0 0 8 6" sw={1.500}><path d="M.5 1L4 4.500 7.500 1" stroke="#b5b5b5" /></Line>
            </ScrollTrack>
          </Viewport>
        </Main>
      </BrowserWindow>
      <Taskbar>
        <WidgetButton>
          <svg width="30" height="28" viewBox="0 0 30 28"><rect width="30" height="28" rx="1.500" fill="#0a66c2" /><rect x="2.500" y="2.500" width="11.500" height="23" rx="1.500" fill="#f3f3f3" /><rect x="16" y="2.500" width="12" height="13" rx="1" fill="#63d3ff" /><rect x="16" y="15.500" width="12" height="5" fill="#1aa0f5" /><rect x="16" y="20.500" width="12" height="5" fill="#0a7fe6" /></svg>
        </WidgetButton>
        <StartButton><i /><i /><i /><i /></StartButton>
        <SearchBox>
          <Line w={20} box="0 0 20 20" sw={2}><circle cx="8.500" cy="8.500" r="7" stroke="#2a2a2a" /><path d="M13.500 13.500l5.500 5.500" stroke="#2a2a2a" /></Line>
          <span>Search</span>
          <svg width="27" height="26" viewBox="0 0 27 26"><defs><linearGradient id="bg" x1="0" y1="0" x2="0" y2="1"><stop stopColor="#28b8f0" /><stop offset="1" stopColor="#1b50c4" /></linearGradient></defs><path d="M2 25V13A11.700 11.700 0 1 1 13.500 24.300z" fill="#f8fcff" stroke="url(#bg)" strokeWidth="1.600" /><path d="M10 5.500v12l3 1.500 5.500-3v-2.500L13.500 11" fill="none" stroke="url(#bg)" strokeWidth="3" strokeLinejoin="round" /></svg>
        </SearchBox>
        <AppRow>{apps.map((a, i) => <AppButton key={i} $state={a.state}>{a.icon}</AppButton>)}</AppRow>
        <Tray>
          <TrayCell $w={32}><Line w={14} h={8} box="0 0 14 8" sw={1.700}><path d="M.7 7.500L7 1l6.300 6.500" /></Line></TrayCell>
          <TrayText $w={64}>ENG<br />IN</TrayText>
          <TrayCell $w={30}><Line w={20} h={15} box="0 0 20 15" sw={1.500}><path d="M.7 5.500a13 13 0 0 1 18.600 0M3.500 8.300a9.200 9.200 0 0 1 13 0M6.200 11a5.300 5.300 0 0 1 7.600 0" /><circle cx="10" cy="13" r="1.300" fill="#fff" /></Line></TrayCell>
          <TrayCell $w={30}><Line w={20} h={16} box="0 0 20 16" sw={1.400}><path d="M1 5.500h3L8.500 1.500v13L4 10.500H1zM11 5.500q1.800 2.500 0 5M13.500 3q3.500 5 0 10M16 1q5 7 0 14" /></Line></TrayCell>
          <TrayCell $w={30}><svg width="20" height="14" viewBox="0 0 20 14"><rect x=".8" y=".8" width="16" height="12.400" rx="3" fill="none" stroke="#fff" strokeWidth="1.500" /><rect x="3" y="3" width="11.600" height="8" rx="1" fill="#fff" /><rect x="17.500" y="4.500" width="2.300" height="5" rx="1" fill="#fff" /></svg></TrayCell>
          <TrayText $w={93} $right>11:55<br />24-09-2023</TrayText>
          <TrayCell $w={38}><Line w={17} h={18} box="0 0 17 18" sw={1.400}><path d="M10 1.500Q3 1 3 7v4.500L1 14.500h14L13.500 11M6 15q2 3 4.500 0M7 7h3.500L7 11h3.500M12 1.500h4L12 6h4" /></Line></TrayCell>
        </Tray>
      </Taskbar>
    </Desktop>
  );
}
